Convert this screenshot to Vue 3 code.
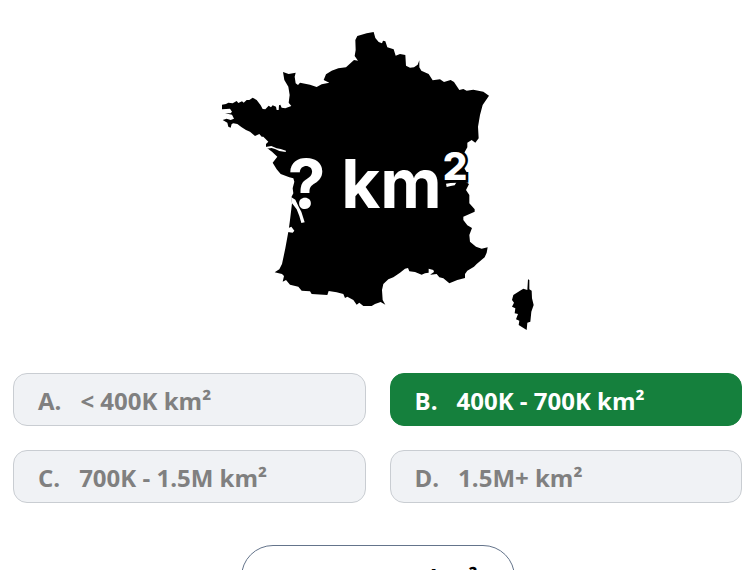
<template>
  <main class="quiz">
    <figure class="map">
      <svg viewBox="9 0 990 960" role="img" aria-label="? km²">
        <path :d="mainland" />
        <path :d="corsica" />
        <path class="water" :d="water" />
        <text x="233" y="564" class="area">? km<tspan class="square" dx="3" dy="-84">2</tspan></text>
      </svg>
    </figure>
    <div class="answers">
      <button
        v-for="answer of answers"
        :key="answer.letter"
        class="answer"
        :class="{ correct: answer.letter === correct }"
        type="button"
      >
        <span>{{ answer.letter }}.</span>
        <span>{{ answer.text }}</span>
      </button>
    </div>
    <button class="result" type="button">551,500 km²</button>
  </main>
</template>

<script setup>
const correct = 'B'

const answers = [
  { letter: 'A', text: '< 400K km²' },
  { letter: 'B', text: '400K - 700K km²' },
  { letter: 'C', text: '700K - 1.5M km²' },
  { letter: 'D', text: '1.5M+ km²' },
]

const mainland =
  'M36 254L48 252 55 248 68 250 80 243 85 249 96 244 101 248 110 240 118 240 128 233 140 240 152 256 158 267 166 268 176 257 183 262 188 256 198 260 200 270 206 270 207 256 211 254 215 263 226 265 244 258 236 248 239 225 235 200 223 180 219 156 236 162 257 158 254 170 257 190 264 195 270 188 300 194 320 201 335 193 358 188 341 180 348 163 365 152 385 145 408 142 432 120 444 122 434 108 437 90 436 60 442 48 470 40 491 36 496 54 506 66 516 70 519 62 526 64 532 82 551 88 557 107 570 102 586 105 588 137 600 143 612 142 623 134 628 121 628 142 634 152 656 162 668 181 690 178 702 186 722 180 732 186 748 210 760 207 770 212 790 209 820 215 837 227 818 255 810 285 804 320 806 355 796 368 785 360 772 368 772 382 762 400 768 420 760 440 772 460 766 485 777 492 768 510 778 525 778 550 794 568 794 575 760 590 760 600 772 616 786 624 778 645 780 665 798 680 815 686 833 682 830 698 824 712 800 732 792 740 772 752 765 762 765 774 742 780 718 790 700 775 688 772 680 762 660 764 672 756 670 750 656 746 656 758 645 760 635 764 615 756 598 754 594 744 585 746 570 758 550 772 535 778 520 792 516 810 518 840 526 854 512 846 495 852 485 858 460 858 448 848 440 854 430 840 412 830 405 834 400 822 380 817 356 813 352 825 305 822 300 814 275 812 265 800 240 794 228 780 218 785 222 768 216 762 194 757 208 748 216 732 226 685 236 630 240 600 246 550 244 532 250 520 248 505 253 485 250 475 238 472 212 462 200 448 188 428 202 410 186 395 168 382 168 372 175 365 160 350 155 350 148 342 135 348 120 335 108 330 95 322 82 312 70 310 65 312 62 323 55 320 52 308 38 300 50 296 62 300 72 296 66 284 45 280 62 280 66 275 60 266 36 268Z'

const corsica =
  'M954 778L958 780 958 808 965 812 966 835 971 855 964 875 961 905 952 908 950 930 926 915 928 902 918 898 924 882 914 880 916 865 906 860 912 848 906 840 910 825 930 812 940 806 952 810Z'

// Loire and Gironde estuaries, Arcachon bay, Lake Geneva
const water =
  'M166 381L184 378 200 385 212 387 228 392 227 396 208 393 195 387 185 384 168 386ZM243 531L256 539 266 560 274 575 284 607 274 609 268 588 260 568 246 550ZM234 625L244 620 253 632 248 638 233 636ZM708 491L740 486 734 496 722 498 710 501Z'
</script>

<style>
body {
  margin: 0;
  background: #fff;
}
</style>

<style scoped>
.quiz {
  display: flex;
  flex-direction: column;
  align-items: center;
  padding: 20px 14px 0 13px;
  font-family: 'Open Sans', 'Noto Sans', sans-serif;
}
.map {
  width: 330px;
  margin: 0;
}
.map svg {
  display: block;
  width: 100%;
}
.water {
  fill: #fff;
}
.area {
  font: 700 202px Inter, sans-serif;
  fill: #fff;
}
.square {
  font-size: 116px;
  font-weight: 800;
  stroke: #000;
  stroke-width: 16px;
  paint-order: stroke;
}
.answers {
  display: grid;
  grid-template-columns: 1fr 1fr;
  gap: 24px;
  width: 100%;
  margin-top: 33px;
}
.answer {
  display: flex;
  align-items: center;
  gap: 19px;
  height: 53px;
  padding: 2px 24px 0;
  border: 1px solid #c9cdd2;
  border-radius: 14px;
  background: #f0f2f5;
  color: #808080;
  font: 700 24px 'Open Sans', 'Noto Sans', sans-serif;
  text-align: left;
}
.correct {
  border-color: #15803d;
  background: #15803d;
  color: #fff;
}
.result {
  width: 274px;
  height: 64px;
  margin-top: 42px;
  padding: 0 36px 0 0;
  border: 1px solid #64748b;
  border-radius: 32px;
  background: #fff;
  color: #000;
  font: 700 24px 'Open Sans', 'Noto Sans', sans-serif;
  text-align: right;
}
</style>
